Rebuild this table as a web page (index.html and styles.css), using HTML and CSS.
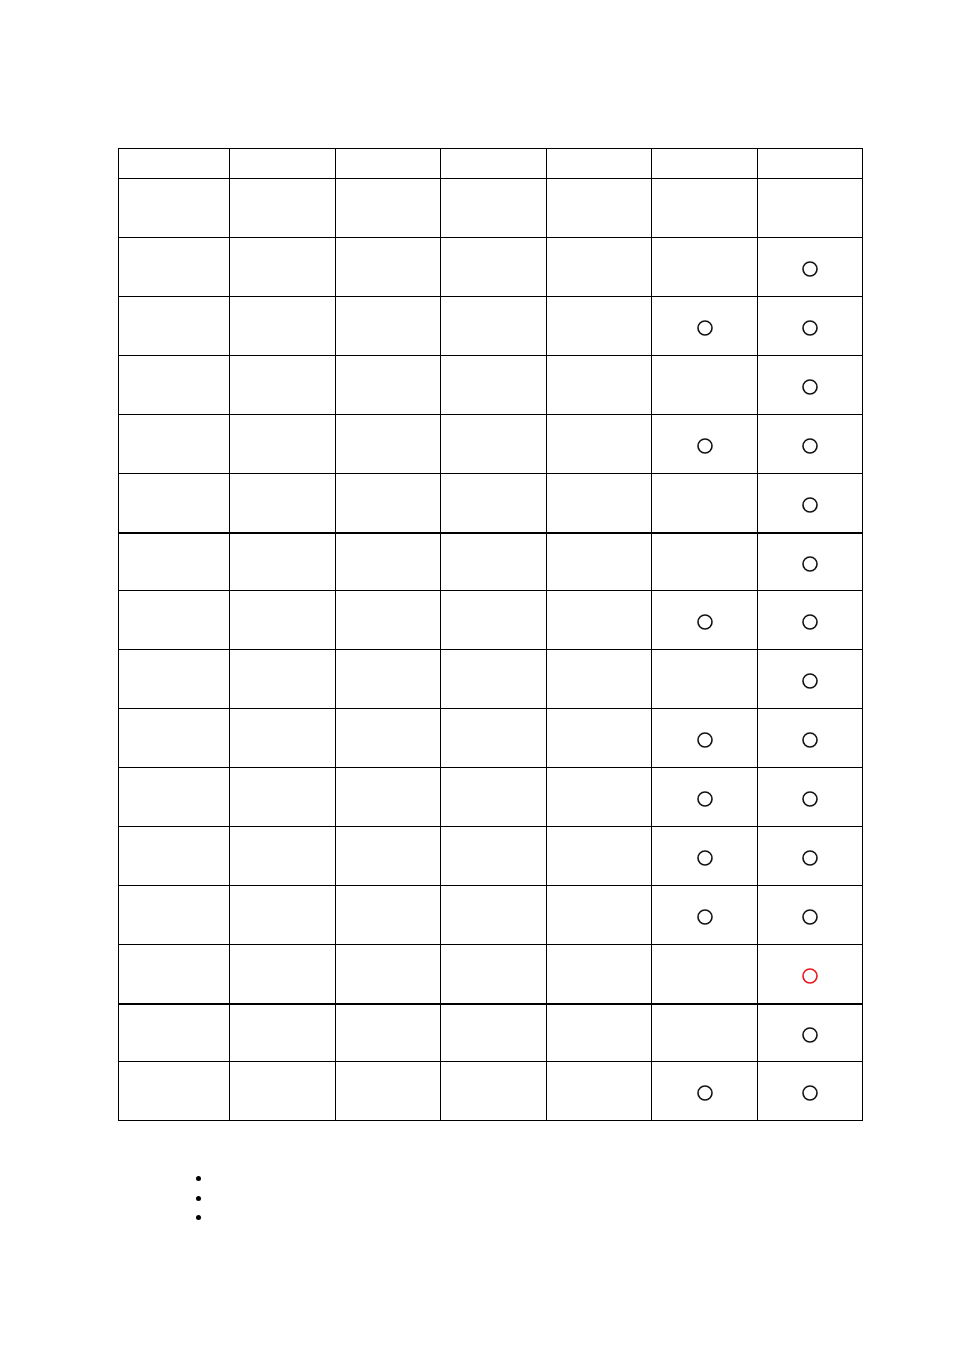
FILE: index.html
```html
<!DOCTYPE html>
<html>
<head>
<meta charset="utf-8">
<link rel="stylesheet" href="styles.css">
</head>
<body>
<div class="page">
<table class="grid">
<colgroup>
<col class="c1"><col class="c2"><col class="c3"><col class="c4"><col class="c5"><col class="c6"><col class="c7">
</colgroup>
<thead>
<tr class="head"><th></th><th></th><th></th><th></th><th></th><th></th><th></th></tr>
</thead>
<tbody>
<tr><td></td><td></td><td></td><td></td><td></td><td></td><td></td></tr>
<tr><td></td><td></td><td></td><td></td><td></td><td></td><td><svg class="mark" viewBox="0 0 16 16"><circle cx="8" cy="8" r="7"/></svg></td></tr>
<tr><td></td><td></td><td></td><td></td><td></td><td><svg class="mark" viewBox="0 0 16 16"><circle cx="8" cy="8" r="7"/></svg></td><td><svg class="mark" viewBox="0 0 16 16"><circle cx="8" cy="8" r="7"/></svg></td></tr>
<tr><td></td><td></td><td></td><td></td><td></td><td></td><td><svg class="mark" viewBox="0 0 16 16"><circle cx="8" cy="8" r="7"/></svg></td></tr>
<tr><td></td><td></td><td></td><td></td><td></td><td><svg class="mark" viewBox="0 0 16 16"><circle cx="8" cy="8" r="7"/></svg></td><td><svg class="mark" viewBox="0 0 16 16"><circle cx="8" cy="8" r="7"/></svg></td></tr>
<tr><td></td><td></td><td></td><td></td><td></td><td></td><td><svg class="mark" viewBox="0 0 16 16"><circle cx="8" cy="8" r="7"/></svg></td></tr>
<tr class="sep"><td></td><td></td><td></td><td></td><td></td><td></td><td><svg class="mark" viewBox="0 0 16 16"><circle cx="8" cy="8" r="7"/></svg></td></tr>
<tr><td></td><td></td><td></td><td></td><td></td><td><svg class="mark" viewBox="0 0 16 16"><circle cx="8" cy="8" r="7"/></svg></td><td><svg class="mark" viewBox="0 0 16 16"><circle cx="8" cy="8" r="7"/></svg></td></tr>
<tr><td></td><td></td><td></td><td></td><td></td><td></td><td><svg class="mark" viewBox="0 0 16 16"><circle cx="8" cy="8" r="7"/></svg></td></tr>
<tr><td></td><td></td><td></td><td></td><td></td><td><svg class="mark" viewBox="0 0 16 16"><circle cx="8" cy="8" r="7"/></svg></td><td><svg class="mark" viewBox="0 0 16 16"><circle cx="8" cy="8" r="7"/></svg></td></tr>
<tr><td></td><td></td><td></td><td></td><td></td><td><svg class="mark" viewBox="0 0 16 16"><circle cx="8" cy="8" r="7"/></svg></td><td><svg class="mark" viewBox="0 0 16 16"><circle cx="8" cy="8" r="7"/></svg></td></tr>
<tr><td></td><td></td><td></td><td></td><td></td><td><svg class="mark" viewBox="0 0 16 16"><circle cx="8" cy="8" r="7"/></svg></td><td><svg class="mark" viewBox="0 0 16 16"><circle cx="8" cy="8" r="7"/></svg></td></tr>
<tr><td></td><td></td><td></td><td></td><td></td><td><svg class="mark" viewBox="0 0 16 16"><circle cx="8" cy="8" r="7"/></svg></td><td><svg class="mark" viewBox="0 0 16 16"><circle cx="8" cy="8" r="7"/></svg></td></tr>
<tr><td></td><td></td><td></td><td></td><td></td><td></td><td><svg class="mark red" viewBox="0 0 16 16"><circle cx="8" cy="8" r="7"/></svg></td></tr>
<tr class="sep"><td></td><td></td><td></td><td></td><td></td><td></td><td><svg class="mark" viewBox="0 0 16 16"><circle cx="8" cy="8" r="7"/></svg></td></tr>
<tr><td></td><td></td><td></td><td></td><td></td><td><svg class="mark" viewBox="0 0 16 16"><circle cx="8" cy="8" r="7"/></svg></td><td><svg class="mark" viewBox="0 0 16 16"><circle cx="8" cy="8" r="7"/></svg></td></tr>
</tbody>
</table>
<ul class="notes">
<li></li>
<li></li>
<li></li>
</ul>
</div>
</body>
</html>
```
FILE: styles.css
```css
html, body {
  margin: 0;
  padding: 0;
  background: #fff;
  font-family: "Liberation Sans", Arial, sans-serif;
}
.page {
  padding: 148px 0 0 118px;
}
.grid {
  border-collapse: collapse;
  table-layout: fixed;
  width: 744px;
}
.c1 { width: 111px; }
.c2 { width: 106px; }
.c3 { width: 105px; }
.c4 { width: 106px; }
.c5 { width: 105px; }
.c6 { width: 106px; }
.c7 { width: 105px; }
.grid th, .grid td {
  border: 1px solid #000;
  padding: 0;
  text-align: center;
  vertical-align: middle;
}
.grid .head th {
  height: 29px;
}
.grid td {
  height: 58px;
}
.grid tr.sep td {
  border-top: 2px solid #000;
  height: 56px;
}
.mark {
  display: block;
  width: 16px;
  height: 16px;
  margin: 3px auto 0;
  fill: none;
  stroke: #111;
  stroke-width: 1.6;
}
.mark.red {
  stroke: #e8141b;
}
.notes {
  list-style: none;
  margin: 48px 0 0 0;
  padding: 0 0 0 78px;
}
.notes li {
  height: 19.5px;
  display: flex;
  align-items: center;
}
.notes li::before {
  content: "";
  width: 5px;
  height: 5px;
  border-radius: 50%;
  background: #000;
}
```
